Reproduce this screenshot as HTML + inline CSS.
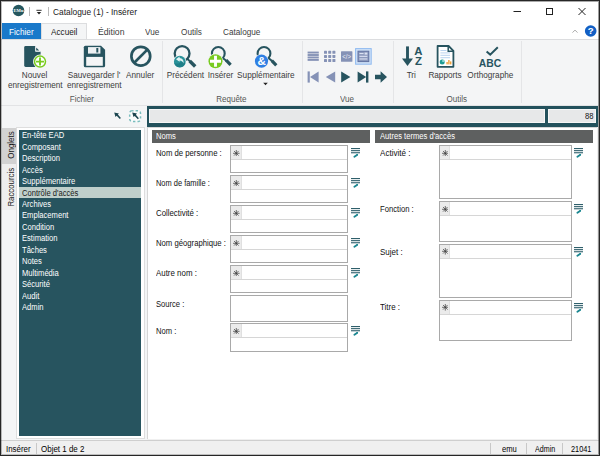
<!DOCTYPE html>
<html lang="fr">
<head>
<meta charset="utf-8">
<title>Catalogue (1) - Insérer</title>
<style>
html,body{margin:0;padding:0;}
body{width:600px;height:456px;overflow:hidden;background:#fff;font-family:"Liberation Sans",sans-serif;color:#222;}
#win{position:absolute;left:0;top:0;width:600px;height:456px;background:#f0f0f0;overflow:hidden;}
.abs{position:absolute;}
.t{position:absolute;white-space:nowrap;line-height:1;transform-origin:0 50%;}
.tc{position:absolute;white-space:nowrap;line-height:1;transform-origin:50% 50%;text-align:center;}
/* ribbon text */
.rb{font-size:9.4px;color:#3c3c3c;transform:scaleX(.875);}
.rbc{font-size:9.4px;color:#3c3c3c;}
.grp{font-size:9.2px;color:#555;}
.frm{font-size:8.3px;color:#111;transform:scaleX(.916);}
.li{font-size:8.3px;color:#fff;transform:scaleX(.916);left:22px;}
.box{position:absolute;border:1px solid #a9a9a9;background:#fff;box-sizing:border-box;}
.star{position:absolute;left:0;top:0;width:9.7px;height:13px;background:#ebebeb;border-right:1px solid #e0e0e0;}
.rowl{position:absolute;left:0;right:0;top:13px;height:1px;background:#d6d6d6;}
.sep{position:absolute;width:1px;background:#e4e5e7;top:41px;height:62px;}
.ssep{position:absolute;width:1px;background:#c8c8c8;top:443px;height:11px;}
</style>
</head>
<body>
<div id="win">
<!-- title bar -->
<div class="abs" id="titlebar" style="left:1px;top:1px;width:598px;height:22px;background:#fff;"></div>
<svg class="abs" style="left:12.2px;top:4.4px" width="13" height="13" viewBox="0 0 13 13"><circle cx="6.5" cy="6.5" r="5.8" fill="#25575f"/><text x="6.5" y="8.3" font-size="4.6" font-weight="bold" fill="#fff" text-anchor="middle" font-family="Liberation Serif, serif">EMu</text></svg>
<div class="abs" style="left:29px;top:7px;width:1px;height:9px;background:#b9b9b9"></div>
<svg class="abs" style="left:35px;top:8px" width="8" height="8" viewBox="0 0 8 8"><rect x="1.4" y="1.8" width="5.2" height="1" fill="#333"/><path d="M1.8 4 L6.2 4 L4 6.4 Z" fill="#222"/></svg>
<div class="abs" style="left:48px;top:7px;width:1px;height:9px;background:#b9b9b9"></div>
<div class="t" style="left:53px;top:6.5px;font-size:9.6px;color:#1a1a1a;transform:scaleX(.87)">Catalogue (1) - Insérer</div>
<svg class="abs" style="left:505px;top:1px" width="94" height="22" viewBox="0 0 94 22"><g stroke="#222" stroke-width="1" fill="none"><path d="M8.5 10.5 H16"/><rect x="41.5" y="7.5" width="6" height="6"/><path d="M73.5 7 L80.5 14 M80.5 7 L73.5 14"/></g></svg>
<!-- tab row -->
<div class="abs" id="tabrow" style="left:1px;top:23px;width:598px;height:16px;background:#fff;"></div>
<div class="abs" style="left:2px;top:23px;width:39px;height:16px;background:#1979ca"></div>
<div class="abs" style="left:41px;top:23px;width:46px;height:17px;background:#f4f5f6;border:1px solid #dcdddf;border-bottom:none;box-sizing:border-box"></div>
<div class="t rb" style="left:8.9px;top:26.7px;color:#fff">Fichier</div>
<div class="t rb" style="left:50.9px;top:26.7px;color:#222">Accueil</div>
<div class="t rb" style="left:97.6px;top:26.7px;transform:scaleX(.925)">Édition</div>
<div class="t rb" style="left:145px;top:26.7px">Vue</div>
<div class="t rb" style="left:180.5px;top:26.7px">Outils</div>
<div class="t rb" style="left:223px;top:26.7px">Catalogue</div>
<svg class="abs" style="left:570px;top:25px" width="28" height="13" viewBox="0 0 28 13"><path d="M2.5 7.6 L5 5.1 L7.5 7.6" stroke="#aaa" stroke-width="1" fill="none"/><circle cx="20.7" cy="6" r="5.8" fill="#125fc4"/><text x="20.7" y="9.4" font-size="9.6" font-weight="bold" fill="#fff" text-anchor="middle" font-family="Liberation Sans, sans-serif">?</text></svg>
<!-- ribbon body -->
<div class="abs" id="ribbon" style="left:1px;top:39px;width:598px;height:67px;background:#f4f5f6;border-top:1px solid #dcdddf;border-bottom:1px solid #e2e3e5;box-sizing:border-box;"></div>
<!-- ribbon content -->
<div class="sep" style="left:162px"></div>
<div class="sep" style="left:302px"></div>
<div class="sep" style="left:393px"></div>
<div class="sep" style="left:521px"></div>
<!-- Nouvel enregistrement -->
<svg class="abs" style="left:22px;top:44px" width="26" height="26" viewBox="0 0 26 26">
<path d="M3.6 2 H13.6 L18.6 7 V21.6 Q18.6 23 17.2 23 H3.6 Q2.2 23 2.2 21.6 V3.4 Q2.2 2 3.6 2 Z" fill="#27545f"/>
<path d="M13.4 1.6 H19 V7.6 H13.4 Z" fill="#f4f5f6"/>
<path d="M13.4 2 L18.6 7.4 H13.4 Z" fill="#fff"/>
<path d="M14.2 3.5 L17.3 6.6 H14.2 Z" fill="#27545f"/>
<circle cx="18" cy="17.6" r="7" fill="#f4f5f6"/>
<circle cx="18" cy="17.6" r="5.5" fill="#fff" stroke="#79cc1f" stroke-width="1.5"/>
<path d="M18 13.6 V21.6 M14 17.6 H22" stroke="#79cc1f" stroke-width="1.9"/>
</svg>
<div class="tc rbc" style="left:0px;width:70px;top:70.2px"><span style="display:inline-block;transform:scaleX(.875)">Nouvel</span></div>
<div class="tc rbc" style="left:0px;width:70px;top:79.6px"><span style="display:inline-block;transform:scaleX(.875)">enregistrement</span></div>
<!-- Sauvegarder -->
<svg class="abs" style="left:82px;top:44px" width="26" height="26" viewBox="0 0 26 26">
<path d="M3.4 1.7 H19 L23.1 5.8 V21.7 Q23.1 23.3 21.5 23.3 H3.4 Q1.8 23.3 1.8 21.7 V3.3 Q1.8 1.7 3.4 1.7 Z" fill="#27545f"/>
<rect x="6" y="3.1" width="12.4" height="6.5" fill="#eef1f3"/>
<rect x="14.3" y="4" width="2" height="4.5" fill="#27545f"/>
<rect x="4.2" y="12.9" width="16.6" height="8.9" fill="#f4f5f6"/>
</svg>
<div class="tc rbc" style="left:59px;width:70px;top:70.2px"><span style="display:inline-block;transform:scaleX(.875)">Sauvegarder l'</span></div>
<div class="tc rbc" style="left:59.5px;width:70px;top:79.6px"><span style="display:inline-block;transform:scaleX(.875)">enregistrement</span></div>
<!-- Annuler -->
<svg class="abs" style="left:128px;top:44px" width="26" height="26" viewBox="0 0 26 26">
<circle cx="12.8" cy="12.2" r="9.4" fill="none" stroke="#27545f" stroke-width="2.7"/>
<path d="M6 19 L19.6 5.4" stroke="#27545f" stroke-width="2.7"/>
</svg>
<div class="tc rbc" style="left:105.5px;width:70px;top:70.2px"><span style="display:inline-block;transform:scaleX(.875)">Annuler</span></div>
<div class="tc grp" style="left:47px;width:70px;top:94.5px"><span style="display:inline-block;transform:scaleX(.875)">Fichier</span></div>
<!-- Précédent -->
<svg class="abs" style="left:170px;top:42px" width="30" height="28" viewBox="0 0 30 28">
<circle cx="12.1" cy="11.5" r="7.4" fill="none" stroke="#27545f" stroke-width="2.3"/>
<path d="M17.3 16.7 L20.2 19.6" stroke="#27545f" stroke-width="2"/>
<path d="M19.7 19.1 L25.2 24.4" stroke="#27545f" stroke-width="3.5"/>
<circle cx="9.8" cy="19.7" r="6.6" fill="#f4f5f6"/>
<circle cx="9.8" cy="19.7" r="5.9" fill="#2a929a"/>
<path d="M4.3 21 A5.7 5.7 0 0 0 15.3 21 Q12 19 8.6 21.4 Q6 21.8 4.3 21 Z" fill="#1f7f88"/>
<path d="M6 17.2 L9.6 14.6 L9.6 16 Q13.8 16.2 13.6 21.4 Q12.4 18.4 9.6 18.4 L9.6 19.8 Z" fill="#e2f3f3"/>
</svg>
<div class="tc rbc" style="left:150px;width:70px;top:70.2px"><span style="display:inline-block;transform:scaleX(.875)">Précédent</span></div>
<!-- Insérer -->
<svg class="abs" style="left:206px;top:42px" width="30" height="28" viewBox="0 0 30 28">
<circle cx="12.3" cy="11.4" r="6.4" fill="none" stroke="#27545f" stroke-width="2.1"/>
<path d="M16.8 15.9 L20.6 19" stroke="#27545f" stroke-width="2"/>
<path d="M20.1 18.2 L24.6 22.9" stroke="#27545f" stroke-width="3.2"/>
<circle cx="9.5" cy="19.2" r="7.7" fill="#f4f5f6"/>
<circle cx="9.5" cy="19.2" r="7" fill="#78cb21"/>
<path d="M9.5 13.8 V24.8 M4 19.2 H15" stroke="#fff" stroke-width="2.9"/>
</svg>
<div class="tc rbc" style="left:185.3px;width:70px;top:70.2px"><span style="display:inline-block;transform:scaleX(.875)">Insérer</span></div>
<!-- Supplémentaire -->
<svg class="abs" style="left:252px;top:42px" width="30" height="28" viewBox="0 0 30 28">
<circle cx="12" cy="11.4" r="6.4" fill="none" stroke="#27545f" stroke-width="2.1"/>
<path d="M16.5 15.9 L20.3 19.2" stroke="#27545f" stroke-width="2"/>
<path d="M19.8 18.6 L24.3 23.3" stroke="#27545f" stroke-width="3.2"/>
<circle cx="9.5" cy="19.1" r="7.2" fill="#f4f5f6"/>
<circle cx="9.5" cy="19.1" r="6.6" fill="#2f7fe3"/>
<text x="9.7" y="23.3" font-size="11.6" font-weight="bold" fill="#fff" text-anchor="middle" font-family="Liberation Sans, sans-serif">&amp;</text>
</svg>
<div class="tc rbc" style="left:230.5px;width:70px;top:70.2px"><span style="display:inline-block;transform:scaleX(.875)">Supplémentaire</span></div>
<svg class="abs" style="left:262px;top:82px" width="7" height="4" viewBox="0 0 7 4"><path d="M1.2 0.8 H5.8 L3.5 3.2 Z" fill="#222"/></svg>
<div class="tc grp" style="left:196px;width:70px;top:94.5px"><span style="display:inline-block;transform:scaleX(.875)">Requête</span></div>
<!-- Vue group -->
<svg class="abs" style="left:304px;top:46px" width="88" height="40" viewBox="0 0 88 40">
<g fill="#8592b6">
<rect x="3.6" y="5.6" width="11.2" height="1.9"/><rect x="3.6" y="8.05" width="11.2" height="1.9"/><rect x="3.6" y="10.5" width="11.2" height="1.9"/><rect x="3.6" y="12.95" width="11.2" height="1.9"/>
<g>
<rect x="20" y="4.8" width="3" height="3" rx=".6"/><rect x="24.2" y="4.8" width="3" height="3" rx=".6"/><rect x="28.4" y="4.8" width="3" height="3" rx=".6"/>
<rect x="20" y="8.9" width="3" height="3" rx=".6"/><rect x="24.2" y="8.9" width="3" height="3" rx=".6"/><rect x="28.4" y="8.9" width="3" height="3" rx=".6"/>
<rect x="20" y="13" width="3" height="3" rx=".6"/><rect x="24.2" y="13" width="3" height="3" rx=".6"/><rect x="28.4" y="13" width="3" height="3" rx=".6"/>
</g>
<rect x="37" y="5.2" width="11.4" height="10.6" rx=".6"/>
</g>
<text x="42.7" y="12.7" font-size="6.4" fill="#eef1f8" text-anchor="middle" font-family="Liberation Sans, sans-serif" textLength="8.8" lengthAdjust="spacingAndGlyphs">&lt;/&gt;</text>
<rect x="51.6" y="2.6" width="15.6" height="15.6" fill="#cfe1f7" stroke="#8fbaf0" stroke-width="1"/>
<rect x="54" y="5.2" width="10.8" height="10.4" fill="#8c99bc" stroke="#6071a0" stroke-width="1"/>
<rect x="55.4" y="7" width="4.2" height="1.1" fill="#dbe2f2"/><rect x="60.6" y="6.6" width="2.8" height="2" fill="#dbe2f2"/>
<rect x="55.4" y="9.8" width="8" height="1.1" fill="#dbe2f2"/><rect x="55.4" y="12.4" width="8" height="1.1" fill="#dbe2f2"/>
<!-- row 2 -->
<g fill="#8592b6">
<rect x="3.6" y="25.4" width="2.2" height="11.2"/><path d="M14.6 25.4 V36.6 L6 31 Z"/>
<path d="M31.2 25.6 V36.4 L21.8 31 Z"/>
</g>
<g fill="#27545f">
<path d="M37.2 25.4 V36.6 L46.4 31 Z"/>
<path d="M53.6 25.4 V36.6 L62.2 31 Z"/><rect x="62" y="25.4" width="2.4" height="11.2"/>
<path d="M71 28.8 H76.6 V25.2 L83 31 L76.6 36.8 V33.2 H71 Z"/>
</g>
</svg>
<div class="tc grp" style="left:312px;width:70px;top:94.5px"><span style="display:inline-block;transform:scaleX(.875)">Vue</span></div>
<!-- Outils group -->
<svg class="abs" style="left:400px;top:44px" width="26" height="26" viewBox="0 0 26 26">
<path d="M7.5 2.4 V17" stroke="#27545f" stroke-width="2.9"/><path d="M2 14.6 H13 L7.5 22 Z" fill="#27545f"/>
<text x="18.4" y="10.8" font-size="11.4" font-weight="bold" fill="#27545f" text-anchor="middle" font-family="Liberation Sans, sans-serif">A</text>
<text x="18.4" y="20.8" font-size="11.4" font-weight="bold" fill="#27545f" text-anchor="middle" font-family="Liberation Sans, sans-serif">Z</text>
</svg>
<div class="tc rbc" style="left:376.3px;width:70px;top:70.2px"><span style="display:inline-block;transform:scaleX(.875)">Tri</span></div>
<svg class="abs" style="left:434px;top:43px" width="24" height="27" viewBox="0 0 24 27">
<path d="M3.6 3 H14.6 L19.4 7.8 V23.8 H3.6 Z" fill="#fff" stroke="#27545f" stroke-width="1.8" stroke-linejoin="round"/>
<path d="M14.2 3 V8.2 H19.4" fill="none" stroke="#27545f" stroke-width="1.5"/>
<g fill="#b9d3ef"><rect x="6.4" y="7" width="6" height="1"/><rect x="6.4" y="9.4" width="9.6" height="1"/><rect x="6.4" y="11.8" width="9.6" height="1"/><rect x="6.4" y="14.2" width="9.6" height="1"/></g>
<circle cx="8.2" cy="19" r="2.5" fill="#1f9c95"/><path d="M8.2 19 V16.5 A2.5 2.5 0 0 1 10.7 19 Z" fill="#8fd6cf"/>
<g fill="#f0a23a"><rect x="12.4" y="19" width="1.4" height="2.4"/><rect x="14.2" y="17" width="1.4" height="4.4"/><rect x="16" y="18.4" width="1.4" height="3"/></g>
</svg>
<div class="tc rbc" style="left:410.2px;width:70px;top:70.2px"><span style="display:inline-block;transform:scaleX(.875)">Rapports</span></div>
<svg class="abs" style="left:476px;top:44px" width="28" height="26" viewBox="0 0 28 26">
<path d="M10.6 7.6 L14.2 10.6 L21.8 3.2" fill="none" stroke="#27545f" stroke-width="2"/>
<text x="14" y="23" font-size="11.6" font-weight="bold" fill="#27545f" text-anchor="middle" font-family="Liberation Sans, sans-serif" textLength="22.4" lengthAdjust="spacingAndGlyphs">ABC</text>
</svg>
<div class="tc rbc" style="left:455px;width:70px;top:70.2px"><span style="display:inline-block;transform:scaleX(.875)">Orthographe</span></div>
<div class="tc grp" style="left:421.6px;width:70px;top:94.5px"><span style="display:inline-block;transform:scaleX(.875)">Outils</span></div>
<!-- tool row below ribbon -->
<div class="abs" id="toolrow" style="left:1px;top:106px;width:598px;height:21px;background:#f4f5f6;"></div>
<div class="abs" style="left:147px;top:106px;width:451px;height:20.6px;background:#23515c"></div>
<div class="abs" style="left:149px;top:109.3px;width:396.3px;height:13.4px;background:#e7e8e9;border:1px solid #f6f6f6;box-sizing:border-box"></div>
<div class="abs" style="left:548px;top:109.3px;width:48.4px;height:13.4px;background:#e7e8e9;border:1px solid #f6f6f6;box-sizing:border-box"></div>
<div class="t frm" style="left:584.6px;top:111.8px;color:#111">88</div>
<svg class="abs" style="left:112px;top:109px" width="32" height="15" viewBox="0 0 32 15">
<path d="M2.2 3.4 L7 4.4 L5.9 5.5 L8.9 9 L7.8 10 L4.7 6.7 L3.5 7.9 Z" fill="#1c4650" stroke="#fff" stroke-width=".5" paint-order="stroke"/>
<rect x="17.7" y="1.7" width="10.8" height="10.8" rx="2.4" fill="#fafcfc" stroke="#79bdbd" stroke-width="1.5" stroke-dasharray="2.4 2.1" stroke-dashoffset="1"/>
<path d="M20.2 3.6 L25 4.6 L23.9 5.7 L26.9 9.2 L25.8 10.2 L22.7 6.9 L21.5 8.1 Z" fill="#1c4650"/>
</svg>
<!-- left panel -->
<div class="abs" id="left" style="left:1px;top:127px;width:146px;height:313px;background:#f4f5f6;"></div>
<div class="abs" style="left:2px;top:127.6px;width:14px;height:36px;background:#d2d2d2"></div>
<div class="abs" style="left:2px;top:163.6px;width:14px;height:46px;background:#eeeeee"></div>
<div class="abs" style="left:16px;top:126.5px;width:128.6px;height:312.5px;background:#fff;border:1px solid #dedede;box-sizing:border-box"></div>
<div class="abs" style="left:19px;top:130px;width:122.4px;height:306px;background:#27545f"></div>
<div class="abs" style="left:19px;top:186.9px;width:122.4px;height:11.2px;background:#bfcfcb"></div>
<div class="abs" style="left:3px;top:131px;width:13px;height:36px;"><div class="abs" style="left:8px;top:13.9px;width:0;height:0"><div class="tc" style="left:-25px;width:50px;top:-4.5px;font-size:9px;color:#1a1a1a;transform:rotate(-90deg)"><span style="display:inline-block;transform:scaleX(.88)">Onglets</span></div></div></div>
<div class="abs" style="left:3px;top:171px;width:13px;height:46px;"><div class="abs" style="left:8px;top:16.1px;width:0;height:0"><div class="tc" style="left:-25px;width:50px;top:-4.5px;font-size:9px;color:#1a1a1a;transform:rotate(-90deg)"><span style="display:inline-block;transform:scaleX(.87)">Raccourcis</span></div></div></div>
<div class="t li" style="top:131.30px">En-tête EAD</div>
<div class="t li" style="top:142.75px">Composant</div>
<div class="t li" style="top:154.20px">Description</div>
<div class="t li" style="top:165.65px">Accès</div>
<div class="t li" style="top:177.10px">Supplémentaire</div>
<div class="t li" style="top:188.55px;color:#1a1a1a">Contrôle d'accès</div>
<div class="t li" style="top:200.00px">Archives</div>
<div class="t li" style="top:211.45px">Emplacement</div>
<div class="t li" style="top:222.90px">Condition</div>
<div class="t li" style="top:234.35px">Estimation</div>
<div class="t li" style="top:245.80px">Tâches</div>
<div class="t li" style="top:257.25px">Notes</div>
<div class="t li" style="top:268.70px">Multimédia</div>
<div class="t li" style="top:280.15px">Sécurité</div>
<div class="t li" style="top:291.60px">Audit</div>
<div class="t li" style="top:303.05px">Admin</div>
<!-- main form -->
<div class="abs" id="form" style="left:146.6px;top:127px;width:450.6px;height:312px;background:#fff;border-left:1px solid #d6d6d6;border-top:1px solid #d6d6d6;box-sizing:border-box;"></div>
<div class="abs" style="left:152px;top:130px;width:217.6px;height:12.6px;background:#5e6060"></div>
<div class="abs" style="left:375px;top:130px;width:217.6px;height:12.6px;background:#5e6060"></div>
<div class="t frm" style="left:156px;top:132.3px;color:#fff">Noms</div>
<div class="t frm" style="left:379.5px;top:132.3px;color:#fff">Autres termes d'accès</div>
<div class="t frm" style="left:156px;top:149.2px;transform:scaleX(0.932)">Nom de personne :</div>
<div class="box" style="left:230px;top:145px;width:118.2px;height:28px"><div class="star"><svg class="abs" style="left:2.2px;top:3.5px" width="6.6" height="6.6" viewBox="0 0 6.6 6.6"><g stroke="#3a3a3a" stroke-width=".7"><path d="M3.3 0 V6.6 M0 3.3 H6.6 M1 1 L5.6 5.6 M5.6 1 L1 5.6"/></g></svg></div><div class="rowl"></div></div>
<svg class="abs" style="left:350px;top:147.4px" width="11" height="12" viewBox="0 0 11 12"><g fill="#2f5f6b"><rect x="1" y="1" width="9" height="1.1"/><rect x="1" y="3.1" width="9" height="1.1"/><rect x="1" y="5.2" width="9" height="1.1"/></g><path d="M4.4 9.7 L7 8" stroke="#1b8791" stroke-width="1.9" stroke-linecap="round"/><path d="M8.2 7 L6.2 7.1 L7.5 8.8 Z" fill="#1b8791"/></svg>
<div class="t frm" style="left:156px;top:179.2px;transform:scaleX(0.897)">Nom de famille :</div>
<div class="box" style="left:230px;top:175px;width:118.2px;height:28px"><div class="star"><svg class="abs" style="left:2.2px;top:3.5px" width="6.6" height="6.6" viewBox="0 0 6.6 6.6"><g stroke="#3a3a3a" stroke-width=".7"><path d="M3.3 0 V6.6 M0 3.3 H6.6 M1 1 L5.6 5.6 M5.6 1 L1 5.6"/></g></svg></div><div class="rowl"></div></div>
<svg class="abs" style="left:350px;top:177.4px" width="11" height="12" viewBox="0 0 11 12"><g fill="#2f5f6b"><rect x="1" y="1" width="9" height="1.1"/><rect x="1" y="3.1" width="9" height="1.1"/><rect x="1" y="5.2" width="9" height="1.1"/></g><path d="M4.4 9.7 L7 8" stroke="#1b8791" stroke-width="1.9" stroke-linecap="round"/><path d="M8.2 7 L6.2 7.1 L7.5 8.8 Z" fill="#1b8791"/></svg>
<div class="t frm" style="left:156px;top:209.2px;transform:scaleX(0.945)">Collectivité :</div>
<div class="box" style="left:230px;top:205px;width:118.2px;height:28px"><div class="star"><svg class="abs" style="left:2.2px;top:3.5px" width="6.6" height="6.6" viewBox="0 0 6.6 6.6"><g stroke="#3a3a3a" stroke-width=".7"><path d="M3.3 0 V6.6 M0 3.3 H6.6 M1 1 L5.6 5.6 M5.6 1 L1 5.6"/></g></svg></div><div class="rowl"></div></div>
<svg class="abs" style="left:350px;top:207.4px" width="11" height="12" viewBox="0 0 11 12"><g fill="#2f5f6b"><rect x="1" y="1" width="9" height="1.1"/><rect x="1" y="3.1" width="9" height="1.1"/><rect x="1" y="5.2" width="9" height="1.1"/></g><path d="M4.4 9.7 L7 8" stroke="#1b8791" stroke-width="1.9" stroke-linecap="round"/><path d="M8.2 7 L6.2 7.1 L7.5 8.8 Z" fill="#1b8791"/></svg>
<div class="t frm" style="left:156px;top:239.2px;transform:scaleX(0.930)">Nom géographique :</div>
<div class="box" style="left:230px;top:235px;width:118.2px;height:28px"><div class="star"><svg class="abs" style="left:2.2px;top:3.5px" width="6.6" height="6.6" viewBox="0 0 6.6 6.6"><g stroke="#3a3a3a" stroke-width=".7"><path d="M3.3 0 V6.6 M0 3.3 H6.6 M1 1 L5.6 5.6 M5.6 1 L1 5.6"/></g></svg></div><div class="rowl"></div></div>
<svg class="abs" style="left:350px;top:237.4px" width="11" height="12" viewBox="0 0 11 12"><g fill="#2f5f6b"><rect x="1" y="1" width="9" height="1.1"/><rect x="1" y="3.1" width="9" height="1.1"/><rect x="1" y="5.2" width="9" height="1.1"/></g><path d="M4.4 9.7 L7 8" stroke="#1b8791" stroke-width="1.9" stroke-linecap="round"/><path d="M8.2 7 L6.2 7.1 L7.5 8.8 Z" fill="#1b8791"/></svg>
<div class="t frm" style="left:156px;top:269.2px;transform:scaleX(0.953)">Autre nom :</div>
<div class="box" style="left:230px;top:265px;width:118.2px;height:28px"><div class="star"><svg class="abs" style="left:2.2px;top:3.5px" width="6.6" height="6.6" viewBox="0 0 6.6 6.6"><g stroke="#3a3a3a" stroke-width=".7"><path d="M3.3 0 V6.6 M0 3.3 H6.6 M1 1 L5.6 5.6 M5.6 1 L1 5.6"/></g></svg></div><div class="rowl"></div></div>
<svg class="abs" style="left:350px;top:267.4px" width="11" height="12" viewBox="0 0 11 12"><g fill="#2f5f6b"><rect x="1" y="1" width="9" height="1.1"/><rect x="1" y="3.1" width="9" height="1.1"/><rect x="1" y="5.2" width="9" height="1.1"/></g><path d="M4.4 9.7 L7 8" stroke="#1b8791" stroke-width="1.9" stroke-linecap="round"/><path d="M8.2 7 L6.2 7.1 L7.5 8.8 Z" fill="#1b8791"/></svg>
<div class="t frm" style="left:156px;top:299.7px;transform:scaleX(0.916)">Source :</div>
<div class="box" style="left:230px;top:295px;width:118.2px;height:26.5px"></div>
<div class="t frm" style="left:156px;top:327.2px">Nom :</div>
<div class="box" style="left:230px;top:323px;width:118.2px;height:28.5px"><div class="star"><svg class="abs" style="left:2.2px;top:3.5px" width="6.6" height="6.6" viewBox="0 0 6.6 6.6"><g stroke="#3a3a3a" stroke-width=".7"><path d="M3.3 0 V6.6 M0 3.3 H6.6 M1 1 L5.6 5.6 M5.6 1 L1 5.6"/></g></svg></div><div class="rowl"></div></div>
<svg class="abs" style="left:350px;top:325.4px" width="11" height="12" viewBox="0 0 11 12"><g fill="#2f5f6b"><rect x="1" y="1" width="9" height="1.1"/><rect x="1" y="3.1" width="9" height="1.1"/><rect x="1" y="5.2" width="9" height="1.1"/></g><path d="M4.4 9.7 L7 8" stroke="#1b8791" stroke-width="1.9" stroke-linecap="round"/><path d="M8.2 7 L6.2 7.1 L7.5 8.8 Z" fill="#1b8791"/></svg>
<div class="t frm" style="left:379.5px;top:149.2px;transform:scaleX(0.973)">Activité :</div>
<div class="box" style="left:438.5px;top:145px;width:133.5px;height:54px"><div class="star"><svg class="abs" style="left:2.2px;top:3.5px" width="6.6" height="6.6" viewBox="0 0 6.6 6.6"><g stroke="#3a3a3a" stroke-width=".7"><path d="M3.3 0 V6.6 M0 3.3 H6.6 M1 1 L5.6 5.6 M5.6 1 L1 5.6"/></g></svg></div><div class="rowl"></div></div>
<svg class="abs" style="left:573px;top:147.4px" width="11" height="12" viewBox="0 0 11 12"><g fill="#2f5f6b"><rect x="1" y="1" width="9" height="1.1"/><rect x="1" y="3.1" width="9" height="1.1"/><rect x="1" y="5.2" width="9" height="1.1"/></g><path d="M4.4 9.7 L7 8" stroke="#1b8791" stroke-width="1.9" stroke-linecap="round"/><path d="M8.2 7 L6.2 7.1 L7.5 8.8 Z" fill="#1b8791"/></svg>
<div class="t frm" style="left:379.5px;top:204.8px;transform:scaleX(0.925)">Fonction :</div>
<div class="box" style="left:438.5px;top:201px;width:133.5px;height:41px"><div class="star"><svg class="abs" style="left:2.2px;top:3.5px" width="6.6" height="6.6" viewBox="0 0 6.6 6.6"><g stroke="#3a3a3a" stroke-width=".7"><path d="M3.3 0 V6.6 M0 3.3 H6.6 M1 1 L5.6 5.6 M5.6 1 L1 5.6"/></g></svg></div><div class="rowl"></div></div>
<svg class="abs" style="left:573px;top:203.4px" width="11" height="12" viewBox="0 0 11 12"><g fill="#2f5f6b"><rect x="1" y="1" width="9" height="1.1"/><rect x="1" y="3.1" width="9" height="1.1"/><rect x="1" y="5.2" width="9" height="1.1"/></g><path d="M4.4 9.7 L7 8" stroke="#1b8791" stroke-width="1.9" stroke-linecap="round"/><path d="M8.2 7 L6.2 7.1 L7.5 8.8 Z" fill="#1b8791"/></svg>
<div class="t frm" style="left:379.5px;top:247.7px;transform:scaleX(0.964)">Sujet :</div>
<div class="box" style="left:438.5px;top:243.5px;width:133.5px;height:54.5px"><div class="star"><svg class="abs" style="left:2.2px;top:3.5px" width="6.6" height="6.6" viewBox="0 0 6.6 6.6"><g stroke="#3a3a3a" stroke-width=".7"><path d="M3.3 0 V6.6 M0 3.3 H6.6 M1 1 L5.6 5.6 M5.6 1 L1 5.6"/></g></svg></div><div class="rowl"></div></div>
<svg class="abs" style="left:573px;top:245.9px" width="11" height="12" viewBox="0 0 11 12"><g fill="#2f5f6b"><rect x="1" y="1" width="9" height="1.1"/><rect x="1" y="3.1" width="9" height="1.1"/><rect x="1" y="5.2" width="9" height="1.1"/></g><path d="M4.4 9.7 L7 8" stroke="#1b8791" stroke-width="1.9" stroke-linecap="round"/><path d="M8.2 7 L6.2 7.1 L7.5 8.8 Z" fill="#1b8791"/></svg>
<div class="t frm" style="left:379.5px;top:303.4px;transform:scaleX(0.959)">Titre :</div>
<div class="box" style="left:438.5px;top:299.5px;width:133.5px;height:41.5px"><div class="star"><svg class="abs" style="left:2.2px;top:3.5px" width="6.6" height="6.6" viewBox="0 0 6.6 6.6"><g stroke="#3a3a3a" stroke-width=".7"><path d="M3.3 0 V6.6 M0 3.3 H6.6 M1 1 L5.6 5.6 M5.6 1 L1 5.6"/></g></svg></div><div class="rowl"></div></div>
<svg class="abs" style="left:573px;top:301.9px" width="11" height="12" viewBox="0 0 11 12"><g fill="#2f5f6b"><rect x="1" y="1" width="9" height="1.1"/><rect x="1" y="3.1" width="9" height="1.1"/><rect x="1" y="5.2" width="9" height="1.1"/></g><path d="M4.4 9.7 L7 8" stroke="#1b8791" stroke-width="1.9" stroke-linecap="round"/><path d="M8.2 7 L6.2 7.1 L7.5 8.8 Z" fill="#1b8791"/></svg>
<!-- status bar -->
<div class="abs" id="status" style="left:1px;top:440px;width:598px;height:15px;background:#f0f0f0;border-top:1px solid #cfcfcf;box-sizing:border-box;"></div>
<div class="t frm" style="left:6.2px;top:444.6px;color:#000;transform:scaleX(0.950)">Insérer</div>
<div class="ssep" style="left:36px"></div>
<div class="t frm" style="left:40.8px;top:444.6px;color:#000;transform:scaleX(0.960)">Objet 1 de 2</div>
<div class="ssep" style="left:490px"></div>
<div class="t frm" style="left:502.4px;top:444.6px;color:#000">emu</div>
<div class="ssep" style="left:526px"></div>
<div class="t frm" style="left:535px;top:444.6px;color:#000;transform:scaleX(0.858)">Admin</div>
<div class="ssep" style="left:562px"></div>
<div class="t frm" style="left:571px;top:444.6px;color:#000;transform:scaleX(0.887)">21041</div>
<!-- window border -->
<div class="abs" style="left:1px;top:1px;width:598px;height:454px;border-style:solid;border-width:1px;border-color:rgba(40,40,40,.4) rgba(40,40,40,.45) rgba(40,40,40,.25) rgba(40,40,40,.3);box-sizing:border-box;pointer-events:none;"></div>
<div class="abs" style="left:0;top:0;width:600px;height:456px;border:1px solid #262626;box-sizing:border-box;pointer-events:none;"></div>
</div>
</body>
</html>
